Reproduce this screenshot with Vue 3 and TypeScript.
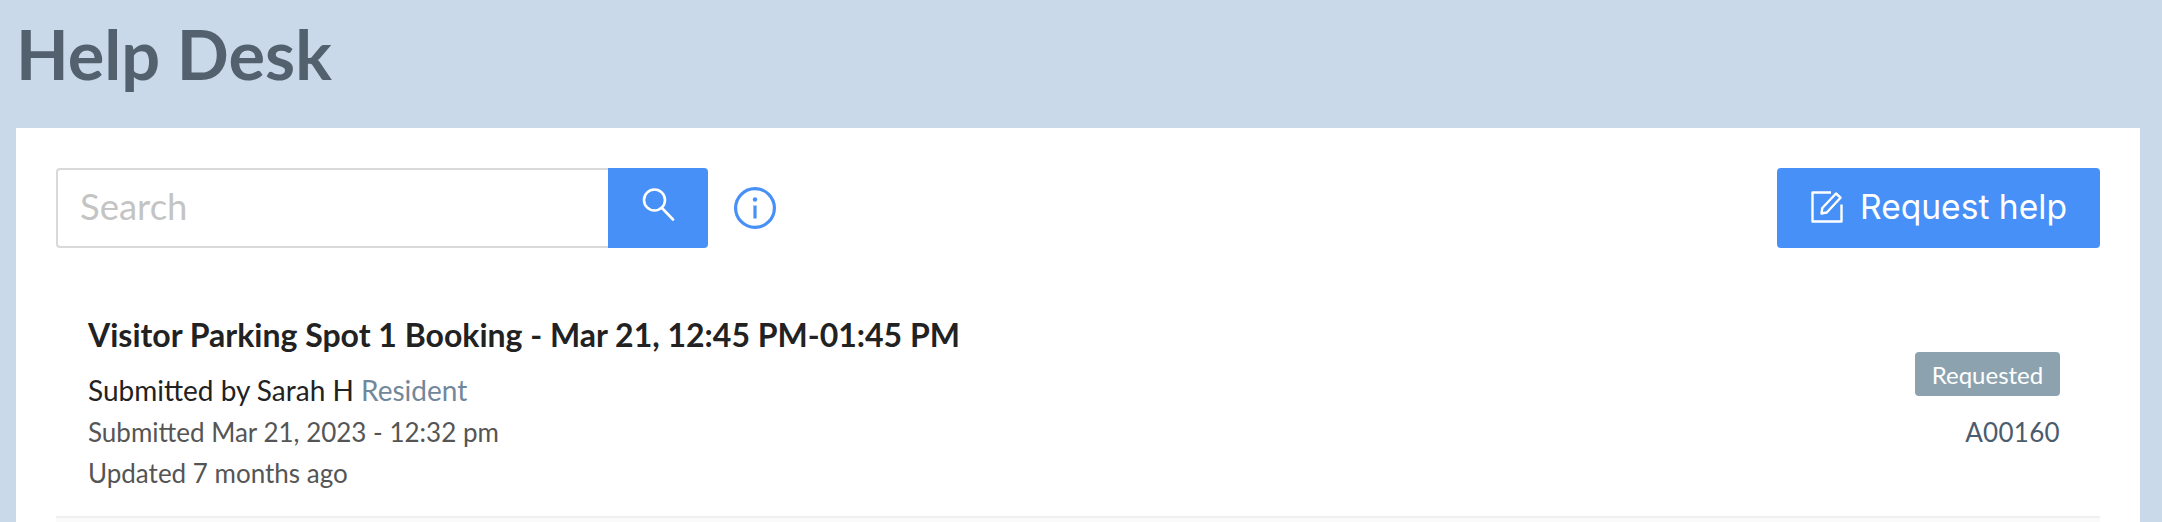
<script setup lang="ts">
const ticket = {
  title: 'Visitor Parking Spot 1 Booking - Mar 21, 12:45 PM-01:45 PM',
  author: 'Sarah H',
  role: 'Resident',
  submitted: 'Submitted Mar 21, 2023 - 12:32 pm',
  updated: 'Updated 7 months ago',
  status: 'Requested',
  code: 'A00160',
};
</script>

<template>
  <div class="page">
    <h1 class="heading">Help Desk</h1>
    <main class="card">
      <div class="toolbar">
        <div class="search">
          <input class="search-input" type="text" placeholder="Search" />
          <button class="search-btn" type="button" aria-label="Search">
            <svg width="34" height="34" viewBox="0 0 34 34" fill="none" stroke="#fff" stroke-width="2.6" stroke-linecap="round">
              <circle cx="13.5" cy="13" r="10.5" />
              <path d="M21 21l11 11.5" />
            </svg>
          </button>
        </div>
        <svg class="info" width="42" height="42" viewBox="0 0 42 42" fill="none" stroke="#4690f8" stroke-width="3.2">
          <circle cx="21" cy="21" r="19.4" />
          <circle cx="21" cy="12.500" r="2.200" fill="#4690f8" stroke="none" />
          <path d="M21 18.500v13" />
        </svg>
        <button class="request-btn" type="button">
          <svg width="34" height="34" viewBox="0 0 34 34" fill="none" stroke="#fff" stroke-width="2.4" stroke-linejoin="round">
            <path d="M21 2.500H2.500v29h29V14.500" />
            <path d="M11.500 23.500l.8-5.500L26 3.500l4.500 4.200L16.800 22.500z" />
          </svg>
          <span>Request help</span>
        </button>
      </div>

      <article class="ticket">
        <div class="ticket-main">
          <h2 class="ticket-title">{{ ticket.title }}</h2>
          <p class="ticket-by">Submitted by {{ ticket.author }} <span class="role">{{ ticket.role }}</span></p>
          <p class="ticket-meta first">{{ ticket.submitted }}</p>
          <p class="ticket-meta">{{ ticket.updated }}</p>
        </div>
        <div class="ticket-side">
          <span class="badge">{{ ticket.status }}</span>
          <span class="code">{{ ticket.code }}</span>
        </div>
      </article>
      <div class="next-row"></div>
    </main>
  </div>
</template>

<style>
html,
body {
  margin: 0;
  background: #c9d9e9;
  overflow: hidden;
}
</style>

<style scoped>
.page {
  height: 522px;
  padding: 0 22px 0 16px;
  box-sizing: border-box;
  overflow: hidden;
  background: #c9d9e9;
  font-family: Lato, "Open Sans", sans-serif;
}

.heading {
  margin: 0;
  height: 128px;
  font-size: 68.5px;
  font-weight: 700;
  line-height: 108px;
  color: #53616f;
}

.card {
  height: 394px;
  padding: 40px 40px 0;
  box-sizing: border-box;
  background: #fff;
}

.toolbar {
  display: flex;
  align-items: center;
}

.search {
  display: flex;
  width: 652px;
  height: 80px;
}

.search-input {
  flex: 1;
  min-width: 0;
  padding: 0 22px 4px;
  box-sizing: border-box;
  border: 2px solid #d9d9d9;
  border-right: 0;
  border-radius: 4px 0 0 4px;
  outline: none;
  font-family: inherit;
  font-size: 36.5px;
  color: #333;
}

.search-input::placeholder {
  color: #c4c4c4;
  opacity: 1;
}

.search-btn {
  display: flex;
  align-items: center;
  justify-content: center;
  width: 100px;
  padding: 0 0 8px;
  border: 0;
  border-radius: 0 4px 4px 0;
  background: #4690f8;
}

.info {
  margin-left: 26px;
}

.request-btn {
  display: flex;
  align-items: center;
  justify-content: center;
  gap: 16px;
  width: 323px;
  height: 80px;
  margin-left: auto;
  padding: 0 0 2px;
  border: 0;
  border-radius: 4px;
  background: #4690f8;
  color: #fff;
  font-family: Inter, sans-serif;
  font-size: 33.6px;
  line-height: 1;
}

.ticket {
  display: flex;
  justify-content: space-between;
  height: 270px;
  padding: 0 40px 0 32px;
  box-sizing: border-box;
  border-bottom: 2px solid #f0f0f0;
}

.next-row {
  height: 4px;
  background: #fafafa;
}

.ticket-title {
  margin: 0;
  padding-top: 67px;
  font-size: 32px;
  font-weight: 700;
  line-height: 40px;
  color: #222;
}

.ticket-by {
  margin: 17px 0 0;
  font-size: 28px;
  line-height: 36px;
  color: #222;
}

.role {
  color: #73879b;
}

.ticket-meta {
  margin: 5px 0 0;
  font-size: 26px;
  line-height: 36px;
  color: #555;
}

.ticket-meta.first {
  margin-top: 6px;
}

.ticket-side {
  display: flex;
  flex-direction: column;
  align-items: flex-end;
  padding-top: 104px;
}

.badge {
  display: flex;
  align-items: center;
  justify-content: center;
  width: 145px;
  height: 44px;
  border-radius: 4px;
  background: #8ca3af;
  color: #fff;
  font-size: 24px;
}

.code {
  margin-top: 18px;
  font-size: 26px;
  line-height: 36px;
  letter-spacing: 0.3px;
  color: #4b5c6d;
}
</style>
